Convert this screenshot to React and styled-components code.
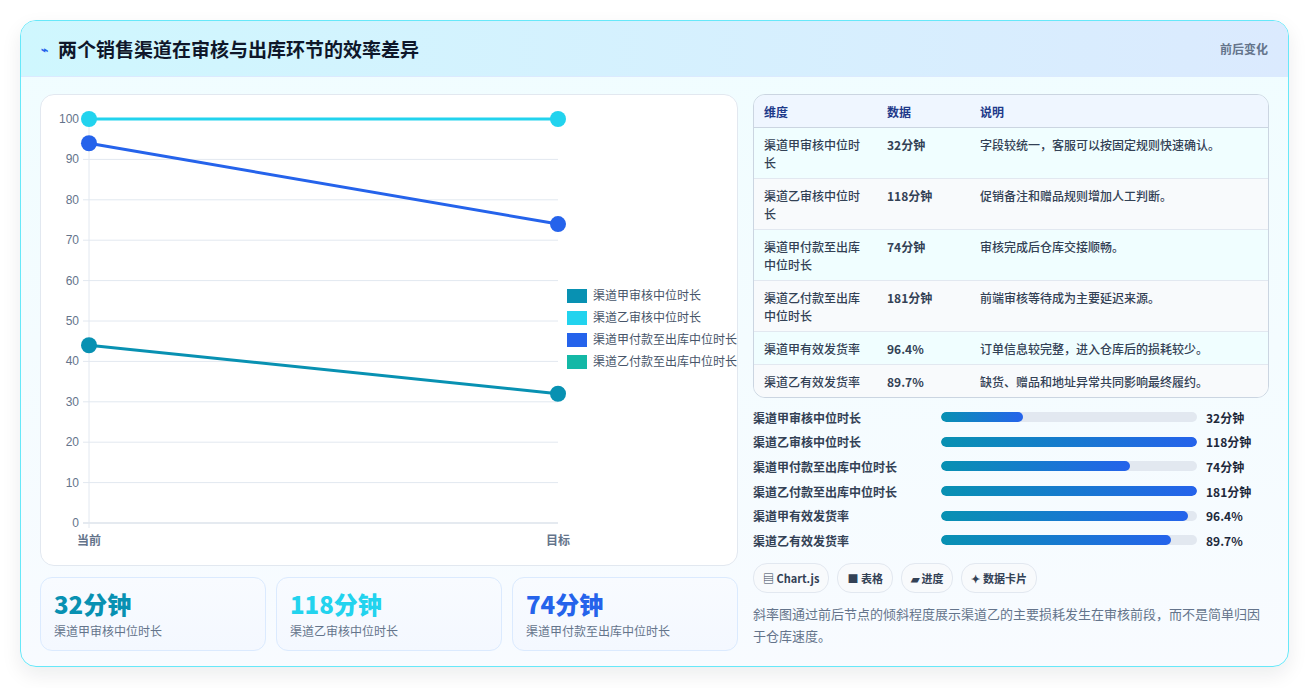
import React from "react";
import styled, { createGlobalStyle } from "styled-components";

const Global = createGlobalStyle`
  body { margin: 0; background: #fff; font-family: "Noto Sans CJK SC", "Noto Sans", sans-serif; color: #1e293b; }
`;

const Page = styled.div`
  padding: 20px;
  height: 688px;
  box-sizing: border-box;
`;

const Card = styled.div`
  border: 1px solid #67e8f9;
  border-radius: 16px;
  overflow: hidden;
  background: linear-gradient(180deg, #f0fdff 0%, #f8fbff 100%);
  box-shadow: 0 8px 20px rgba(15, 23, 42, 0.08);
  height: 647px;
  box-sizing: border-box;
`;

const Header = styled.div`
  height: 55px;
  display: flex;
  align-items: center;
  justify-content: space-between;
  padding: 0 20px;
  background: linear-gradient(90deg, #cff7fe 0%, #dbeafe 100%);
  border-bottom: 1px solid #dbeafe;
`;

const Title = styled.h1`
  margin: 0;
  font-size: 19px;
  font-weight: 700;
  color: #0f172a;
  display: flex;
  align-items: center;
  gap: 10px;
`;

const Icon = styled.span`
  font-size: 12px;
  color: #2563eb;
`;

const HeaderNote = styled.span`
  font-size: 12px;
  font-weight: 600;
  color: #64748b;
`;

const Body = styled.div`
  display: grid;
  grid-template-columns: 698px 516px;
  gap: 15px;
  padding: 17px 19px 0 19px;
`;

const Col = styled.div`
  display: flex;
  flex-direction: column;
`;

const ChartCard = styled.div`
  height: 470px;
  background: #fff;
  border: 1px solid #e2e8f0;
  border-radius: 14px;
  overflow: hidden;
`;

const Stats = styled.div`
  display: grid;
  grid-template-columns: repeat(3, 1fr);
  gap: 10px;
  margin-top: 11px;
`;

const Stat = styled.div`
  height: 74px;
  box-sizing: border-box;
  border: 1px solid #dbeafe;
  border-radius: 12px;
  background: linear-gradient(180deg, #f8fbff, #f4f8ff);
  padding: 10px 13px;
`;

const StatValue = styled.div`
  font-size: 24px;
  font-weight: 800;
  color: ${(p) => p.color};
  line-height: 32px;
`;

const StatLabel = styled.div`
  font-size: 12px;
  color: #64748b;
  margin-top: 2px;
`;

const TableWrap = styled.div`
  border: 1px solid #cbd5e1;
  border-radius: 12px;
  overflow: hidden;
`;

const Table = styled.table`
  width: 100%;
  border-collapse: collapse;
  font-size: 12px;
  table-layout: fixed;
  th {
    text-align: left;
    background: #eff6ff;
    color: #1e3a8a;
    font-weight: 700;
    height: 32px;
    padding: 0 10px;
    border-bottom: 1px solid #cbd5e1;
  }
  td {
    padding: 8px 10px 6px;
    vertical-align: top;
    line-height: 18px;
    color: #334155;
    font-weight: 500;
    border-bottom: 1px solid #e2e8f0;
  }
  tr:nth-child(odd) td { background: #f0feff; }
  tr:nth-child(even) td { background: #f8fafc; }
  tr:last-child td { border-bottom: none; }
`;

const Bars = styled.div`
  display: flex;
  flex-direction: column;
  gap: 6.7px;
  margin-top: 10px;
`;

const BarRow = styled.div`
  display: grid;
  grid-template-columns: 188px 256px 1fr;
  align-items: center;
  height: 18px;
  font-size: 12px;
  font-weight: 600;
  color: #334155;
`;

const Track = styled.div`
  height: 10px;
  background: #e2e8f0;
  border-radius: 5px;
  overflow: hidden;
`;

const Fill = styled.div`
  height: 100%;
  border-radius: 5px;
  background: linear-gradient(90deg, #0891b2, #2563eb);
`;

const BarValue = styled.span`
  padding-left: 9px;
  font-weight: 700;
  color: #1e293b;
`;

const Chips = styled.div`
  display: flex;
  gap: 8px;
  margin-top: 14px;
`;

const Chip = styled.span`
  height: 28px;
  display: inline-flex;
  align-items: center;
  padding: 0 9px;
  border: 1px solid #e2e8f0;
  border-radius: 14px;
  background: #f8fafc;
  font-size: 11px;
  font-weight: 600;
  color: #334155;
`;

const Note = styled.p`
  margin: 10px 0 0;
  font-size: 13px;
  line-height: 22px;
  color: #64748b;
`;

const COLORS = ["#0891b2", "#22d3ee", "#2563eb", "#14b8a6"];

function Chart() {
  const y = (v) => 117 + (100 - v) * 4.04 - 93;
  const x0 = 48, x1 = 517;
  const series = [
    [44, 32, COLORS[0]],
    [100, 100, COLORS[1]],
    [94, 74, COLORS[2]],
  ];
  const legend = ["渠道甲审核中位时长", "渠道乙审核中位时长", "渠道甲付款至出库中位时长", "渠道乙付款至出库中位时长"];
  return (
    <svg width="698" height="470" fontFamily="Liberation Sans, Noto Sans CJK SC, sans-serif">
      {[0, 10, 20, 30, 40, 50, 60, 70, 80, 90, 100].map((v) => (
        <g key={v}>
          <line x1={x0 - 6} x2={x1} y1={y(v)} y2={y(v)} stroke={v === 0 ? "#cbd5e1" : "#e2e8f0"} />
          <text x={x0 - 10} y={y(v) + 4} fontSize="12" fill="#64748b" textAnchor="end">{v}</text>
        </g>
      ))}
      <line x1={x0} x2={x0} y1={y(100)} y2={y(0) + 5} stroke="#e2e8f0" />
      <text x={x0} y={450} fontSize="12" fontWeight="600" fill="#64748b" textAnchor="middle">当前</text>
      <text x={x1} y={450} fontSize="12" fontWeight="600" fill="#64748b" textAnchor="middle">目标</text>
      {series.map(([a, b, c]) => (
        <g key={c}>
          <line x1={x0} y1={y(a)} x2={x1} y2={y(b)} stroke={c} strokeWidth="3" />
          <circle cx={x0} cy={y(a)} r="8" fill={c} />
          <circle cx={x1} cy={y(b)} r="8" fill={c} />
        </g>
      ))}
      {legend.map((l, i) => (
        <g key={l}>
          <rect x={526} y={194 + i * 22} width={20} height={14} fill={COLORS[i]} />
          <text x={552} y={205 + i * 22} fontSize="12" fill="#475569">{l}</text>
        </g>
      ))}
    </svg>
  );
}

const rows = [
  ["渠道甲审核中位时长", "32分钟", "字段较统一，客服可以按固定规则快速确认。"],
  ["渠道乙审核中位时长", "118分钟", "促销备注和赠品规则增加人工判断。"],
  ["渠道甲付款至出库中位时长", "74分钟", "审核完成后仓库交接顺畅。"],
  ["渠道乙付款至出库中位时长", "181分钟", "前端审核等待成为主要延迟来源。"],
  ["渠道甲有效发货率", "96.4%", "订单信息较完整，进入仓库后的损耗较少。"],
  ["渠道乙有效发货率", "89.7%", "缺货、赠品和地址异常共同影响最终履约。"],
];
const pct = [32, 100, 74, 100, 96.4, 89.7];

export default function App() {
  return (
    <Page>
      <Global />
      <Card>
        <Header>
          <Title><Icon>⌁</Icon>两个销售渠道在审核与出库环节的效率差异</Title>
          <HeaderNote>前后变化</HeaderNote>
        </Header>
        <Body>
          <Col>
            <ChartCard><Chart /></ChartCard>
            <Stats>
              <Stat><StatValue color="#0891b2">32分钟</StatValue><StatLabel>渠道甲审核中位时长</StatLabel></Stat>
              <Stat><StatValue color="#22d3ee">118分钟</StatValue><StatLabel>渠道乙审核中位时长</StatLabel></Stat>
              <Stat><StatValue color="#2563eb">74分钟</StatValue><StatLabel>渠道甲付款至出库中位时长</StatLabel></Stat>
            </Stats>
          </Col>
          <Col>
            <TableWrap>
              <Table>
                <colgroup><col width="123" /><col width="93" /><col /></colgroup>
                <thead><tr><th>维度</th><th>数据</th><th>说明</th></tr></thead>
                <tbody>
                  {rows.map((r) => (
                    <tr key={r[0]}><td>{r[0]}</td><td style={{ fontWeight: 700 }}>{r[1]}</td><td>{r[2]}</td></tr>
                  ))}
                </tbody>
              </Table>
            </TableWrap>
            <Bars>
              {rows.map((r, i) => (
                <BarRow key={r[0]}>
                  <span>{r[0]}</span>
                  <Track><Fill style={{ width: `${pct[i]}%` }} /></Track>
                  <BarValue>{r[1]}</BarValue>
                </BarRow>
              ))}
            </Bars>
            <Chips>
              <Chip>▤ Chart.js</Chip>
              <Chip>■ 表格</Chip>
              <Chip>▰ 进度</Chip>
              <Chip>✦ 数据卡片</Chip>
            </Chips>
            <Note>斜率图通过前后节点的倾斜程度展示渠道乙的主要损耗发生在审核前段，而不是简单归因于仓库速度。</Note>
          </Col>
        </Body>
      </Card>
    </Page>
  );
}
